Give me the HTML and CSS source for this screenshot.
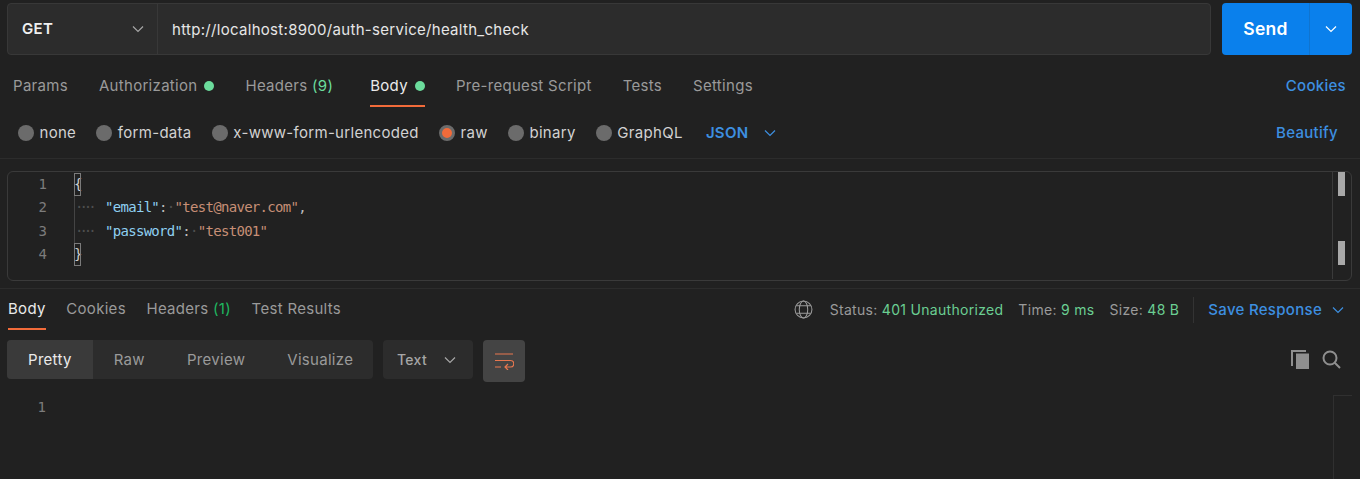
FILE: index.html
```html
<!DOCTYPE html>
<html lang="en">
<head>
<meta charset="utf-8">
<title>Postman request</title>
<link rel="stylesheet" href="styles.css">
</head>
<body>
<div class="app">
  <section class="urlrow">
    <div class="urlbox">
      <div class="method"><span>GET</span>
        <svg class="chev" width="12" height="12" viewBox="0 0 12 12"><path d="M1 3.5 6 8.5 11 3.5"/></svg>
      </div>
      <div class="url">http://localhost:8900/auth-service/health_check</div>
    </div>
    <div class="send">
      <span class="send-label">Send</span>
      <span class="send-more"><svg class="chev white" width="12" height="12" viewBox="0 0 12 12"><path d="M1 3.5 6 8.5 11 3.5"/></svg></span>
    </div>
  </section>

  <nav class="reqtabs">
    <span class="tab">Params</span>
    <span class="tab">Authorization<i class="dot"></i></span>
    <span class="tab tab-count">Headers <em>(9)</em></span>
    <span class="tab active">Body<i class="dot"></i></span>
    <span class="tab">Pre-request Script</span>
    <span class="tab">Tests</span>
    <span class="tab">Settings</span>
    <span class="link cookies">Cookies</span>
  </nav>

  <div class="bodytypes">
    <label class="radio"><i></i>none</label>
    <label class="radio"><i></i>form-data</label>
    <label class="radio"><i></i>x-www-form-urlencoded</label>
    <label class="radio on"><i></i>raw</label>
    <label class="radio"><i></i>binary</label>
    <label class="radio"><i></i>GraphQL</label>
    <span class="lang">JSON<svg class="chev blue" width="12" height="12" viewBox="0 0 12 12"><path d="M1 3.5 6 8.5 11 3.5"/></svg></span>
    <span class="link beautify">Beautify</span>
  </div>

  <div class="editor">
    <div class="gutter"><span>1</span><span>2</span><span>3</span><span>4</span></div>
    <div class="code">
      <div class="line"><b class="brace">{</b></div>
      <div class="line"><b class="guide"></b><s class="ind">····</s><span class="k">"email"</span><span class="p">:</span><s>·</s><span class="v">"test@naver.com"</span><span class="p">,</span></div>
      <div class="line"><b class="guide"></b><s class="ind">····</s><span class="k">"password"</span><span class="p">:</span><s>·</s><span class="v">"test001"</span></div>
      <div class="line"><b class="brace">}</b></div>
    </div>
    <div class="minimap"><i class="thumb top"></i><i class="thumb bottom"></i></div>
  </div>

  <div class="resphead">
    <nav class="resptabs">
      <span class="tab active">Body</span>
      <span class="tab">Cookies</span>
      <span class="tab">Headers <em class="deep">(1)</em></span>
      <span class="tab">Test Results</span>
    </nav>
    <div class="stats">
      <svg class="globe" width="19" height="19" viewBox="0 0 18 18"><circle cx="9" cy="9" r="8"/><ellipse cx="9" cy="9" rx="4" ry="8"/><path d="M2.2 5.5h13.6M2.2 12.5h13.6"/></svg>
      <span class="stat">Status: <em>401 Unauthorized</em></span>
      <span class="stat">Time: <em>9 ms</em></span>
      <span class="stat last">Size: <em>48 B</em></span>
      <span class="save">Save Response<svg class="chev blue" width="12" height="12" viewBox="0 0 12 12"><path d="M1 3.5 6 8.5 11 3.5"/></svg></span>
    </div>
  </div>

  <div class="toolbar">
    <div class="seg">
      <span class="on">Pretty</span><span>Raw</span><span>Preview</span><span>Visualize</span>
    </div>
    <div class="select">Text<svg class="chev" width="12" height="12" viewBox="0 0 12 12"><path d="M1 3.5 6 8.5 11 3.5"/></svg></div>
    <div class="wrap">
      <svg width="20" height="18" viewBox="0 0 20 18"><path d="M1 2h18M1 8.5h15.5a3.25 3.25 0 0 1 0 6.5H11M14 12l-3 3 3 3M1 15h6"/></svg>
    </div>
    <div class="tools">
      <svg width="19" height="19" viewBox="0 0 19 19"><path class="fill" d="M5 3.5h13V19H5z"/><path class="line2" d="M1 16V1h14"/></svg>
      <svg width="19" height="19" viewBox="0 0 19 19"><circle class="ring" cx="8" cy="8" r="6.5"/><path class="ring" d="M12.5 12.5 18 18"/></svg>
    </div>
  </div>

  <div class="respbody">
    <div class="gutter"><span>1</span></div>
    <div class="rail"></div>
  </div>
</div>
</body>
</html>
```
FILE: styles.css
```css
* { box-sizing: border-box; }
html, body { margin: 0; height: 479px; overflow: hidden; }
body { background: #212121; color: #a6a6a6; font: 15px/20px Inter, "Noto Sans", sans-serif; letter-spacing: .3px; }
em { font-style: normal; }
.app { display: flex; flex-direction: column; height: 479px; }

.chev { fill: none; stroke: #a6a6a6; stroke-width: 1.2; flex: none; }
.chev.white { stroke: #fff; }
.chev.blue { stroke: #3d8fe0; }

.urlrow { display: flex; gap: 11px; padding: 3px 8px 0 7px; height: 55px; }
.urlbox { flex: 1; display: flex; background: #2c2c2c; border: 1px solid #383838; border-radius: 4px; }
.method { width: 150px; display: flex; align-items: center; justify-content: space-between; padding: 0 13px 0 14px; border-right: 1px solid #383838; color: #f0f0f0; font-weight: 600; font-size: 15px; }
.url { padding: 0 14px; line-height: 51px; color: #e6e6e6; font-size: 15px; }
.send { width: 130px; display: flex; background: #0a80ec; border-radius: 4px; color: #fff; font-weight: 600; font-size: 17.5px; }
.send-label { flex: 1; text-align: center; line-height: 52px; }
.send-more { width: 43px; border-left: 1px solid #0f74d0; display: flex; align-items: center; justify-content: center; }

.reqtabs { display: flex; align-items: flex-start; height: 52px; padding: 0 14px 0 13px; gap: 31px; }
.tab { display: flex; align-items: center; color: #9a9a9a; white-space: pre; height: 41px; margin-top: 11px; border-bottom: 2px solid transparent; }
.tab-count { margin-right: 6px; }
.tab.active { color: #eaeaea; border-bottom-color: #f26b3a; }
.tab em { color: #6bdc9c; }
.tab em.deep { color: #1fb860; }
.dot { width: 10px; height: 10px; border-radius: 50%; background: #6bdc9c; margin-left: 7px; }
.link { color: #3d8fe0; font-weight: 500; }
.cookies { margin-left: auto; margin-top: 21px; }
.beautify { margin-left: auto; margin-right: 14px; }

.bodytypes { display: flex; align-items: center; height: 52px; padding: 1px 8px 0 18px; border-bottom: 1px solid #2c2c2c; gap: 20.2px; }
.radio { display: flex; align-items: center; gap: 5.5px; color: #d2d2d2; }
.radio i { width: 16px; height: 16px; border-radius: 50%; background: #6b6b6b; }
.radio.on i { background: #f26b3a; border: 3px solid #6b6b6b; }
.lang { display: flex; align-items: center; gap: 16px; color: #3d8fe0; font-weight: 600; margin-left: 3px; }

.editor { margin: 12px 8px 0 7px; height: 110px; border: 1px solid #3a3a3a; border-radius: 6px; display: flex; position: relative; letter-spacing: 0; }
.gutter { width: 66px; display: flex; flex-direction: column; padding-top: 1px; font: 14px/23.4px "DejaVu Sans Mono", monospace; letter-spacing: 0; color: #7c7c7c; }
.gutter span { text-align: right; padding-right: 27px; }
.code { flex: 1; padding-top: 1px; font: 14px/23.4px "DejaVu Sans Mono", monospace; letter-spacing: -.7px; color: #cfcfcf; }
.line { height: 23.4px; position: relative; white-space: pre; }
.brace { font-weight: 400; outline: 1px solid #7b7b7b; outline-offset: -1px; display: inline-block; height: 23px; width: 7px; line-height: 23px; }
.guide { position: absolute; left: 0; top: 0; width: 1px; height: 24px; background: #444; }
.line s { text-decoration: none; color: #4f4f4f; }
.line s.ind { display: inline-block; width: 31px; letter-spacing: -4px; padding-left: 1px; }
.k { color: #8fd0f2; }
.v { color: #c78f76; }
.p { color: #bdbdbd; }
.minimap { width: 19px; border-left: 1px solid #3a3a3a; position: relative; flex: none; margin-bottom: 1px; }
.thumb { position: absolute; left: 5px; width: 7px; background: #a8a8a8; }
.thumb.top { top: 0; height: 24px; }
.thumb.bottom { bottom: 14px; height: 24px; }

.resphead { display: flex; justify-content: space-between; align-items: stretch; margin-top: 7px; border-top: 1px solid #2c2c2c; height: 42px; padding: 0 16px 0 8px; }
.resptabs { display: flex; gap: 20.6px; }
.resptabs .tab { margin-top: 0; }
.stats { display: flex; align-items: center; font-size: 14px; }
.globe { fill: none; stroke: #9a9a9a; stroke-width: 1; margin-right: 17px; }
.stat { margin-right: 15px; color: #9a9a9a; }
.stat.last { margin-right: 14px; }
.stat em { color: #6bcf93; }
.save { display: flex; align-items: center; gap: 10px; color: #3d8fe0; font-weight: 500; font-size: 15px; padding-left: 14px; border-left: 1px solid #333; height: 26px; }

.toolbar { display: flex; align-items: flex-start; gap: 10px; margin-top: 10px; padding: 0 19px 0 7px; height: 42px; }
.seg { display: flex; height: 39px; width: 366px; background: #2c2c2c; border-radius: 4px; overflow: hidden; align-items: stretch; }
.seg span { display: flex; align-items: center; justify-content: center; color: #9a9a9a; padding: 1px 21px 0; }
.seg span.on { width: 86px; background: #3a3a3a; color: #eaeaea; }
.select { width: 90px; height: 39px; background: #2c2c2c; border-radius: 4px; display: flex; align-items: center; justify-content: space-between; padding: 1px 17px 0 14px; font-size: 14px; font-weight: 500; color: #a6a6a6; }
.wrap { width: 42px; height: 42px; background: #444; border-radius: 4px; display: flex; align-items: center; justify-content: center; }
.wrap svg { fill: none; stroke: #e8774f; stroke-width: 1.2; }
.tools { margin-left: auto; display: flex; gap: 12px; padding-top: 10px; }
.fill { fill: #8f8f8f; }
.line2, .ring { fill: none; stroke: #8f8f8f; stroke-width: 2; }

.respbody { display: flex; flex: 1; margin-top: 13px; }
.respbody .gutter { width: 73px; padding-top: 1px; }
.rail { margin-left: auto; width: 19px; margin-right: 8px; border-left: 1px solid #303030; border-top: 1px solid #303030; }
```
